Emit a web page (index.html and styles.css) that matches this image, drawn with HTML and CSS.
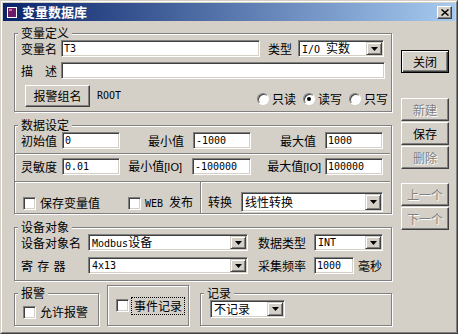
FILE: index.html
```html
<!DOCTYPE html>
<html>
<head>
<meta charset="utf-8">
<link rel="stylesheet" href="styles.css">
</head>
<body>
<div class="win">
 <div class="frame">
  <div class="title">
   <svg class="ticon" width="10" height="11" viewBox="0 0 10 11"><rect x="0.5" y="0.5" width="9" height="10" fill="#6a1a66" stroke="#fff"/><rect x="2" y="2" width="3" height="2" fill="#e07080"/></svg>
   <span class="ttext">变量数据库</span>
   <span class="tclose"><svg width="8" height="7" viewBox="0 0 8 7"><path d="M0.5 0.5 L7.5 6.5 M7.5 0.5 L0.5 6.5" stroke="#000" stroke-width="1.5"/></svg></span>
  </div>
  <div class="main">
   <div class="left">
    <fieldset class="grp g1">
     <legend>变量定义</legend>
     <div class="row ra">
      <span class="lbl w40">变量名</span>
      <span class="edit mono w199">T3</span>
      <span class="lbl ml8">类型</span>
      <span class="combo ml6 w86"><span class="val"><span class="mono">I/O </span>实数</span><span class="drop"><svg width="7" height="4" viewBox="0 0 7 4"><polygon points="0,0 7,0 3.5,4" fill="#000"/></svg></span></span>
     </div>
     <div class="row rb">
      <span class="lbl w40">描　述</span>
      <span class="edit mono w324"></span>
     </div>
     <div class="row rc">
      <span class="btn bgrp">报警组名</span>
      <span class="mono root">ROOT</span>
      <span class="radios">
       <span class="ropt"><span class="radio"></span>只读</span>
       <span class="ropt"><span class="radio on"></span>读写</span>
       <span class="ropt"><span class="radio"></span>只写</span>
      </span>
     </div>
    </fieldset>

    <fieldset class="grp g2">
     <legend>数据设定</legend>
     <div class="sec s1">
      <span class="lbl w41">初始值</span>
      <span class="edit mono w58">0</span>
      <span class="lbl rl w73">最小值</span>
      <span class="edit mono w58">-1000</span>
      <span class="lbl rl w74">最大值</span>
      <span class="edit mono w58">1000</span>
     </div>
     <div class="sec s2">
      <span class="lbl w41">灵敏度</span>
      <span class="edit mono w58">0.01</span>
      <span class="lbl rl w72 pr10">最小值<span class="lat">[IO]</span></span>
      <span class="edit mono w59">-100000</span>
      <span class="lbl rl w74 pr4">最大值<span class="lat">[IO]</span></span>
      <span class="edit mono w58">100000</span>
     </div>
     <div class="sec s3">
      <div class="s3l">
       <span class="chk"></span><span class="ctext">保存变量值</span>
       <span class="chk ml28"></span><span class="ctext"><span class="mono">WEB </span>发布</span>
      </div>
      <div class="s3r">
       <span class="lbl">转换</span>
       <span class="combo ml9 w142 h20"><span class="val">线性转换</span><span class="drop"><svg width="7" height="4" viewBox="0 0 7 4"><polygon points="0,0 7,0 3.5,4" fill="#000"/></svg></span></span>
      </div>
     </div>
    </fieldset>

    <fieldset class="grp g3">
     <legend>设备对象</legend>
     <div class="row r1">
      <span class="lbl w67">设备对象名</span>
      <span class="combo w160"><span class="val"><span class="mono">Modbus</span>设备</span><span class="drop"><svg width="7" height="4" viewBox="0 0 7 4"><polygon points="0,0 7,0 3.5,4" fill="#000"/></svg></span></span>
      <span class="lbl ml10 w48">数据类型</span>
      <span class="combo ml8 w69"><span class="val mono">INT</span><span class="drop"><svg width="7" height="4" viewBox="0 0 7 4"><polygon points="0,0 7,0 3.5,4" fill="#000"/></svg></span></span>
     </div>
     <div class="row r2">
      <span class="lbl w67 spaced">寄 存 器</span>
      <span class="combo w160"><span class="val mono">4x13</span><span class="drop"><svg width="7" height="4" viewBox="0 0 7 4"><polygon points="0,0 7,0 3.5,4" fill="#000"/></svg></span></span>
      <span class="lbl ml10 w48">采集频率</span>
      <span class="edit mono ml8 w40">1000</span>
      <span class="lbl ml4">毫秒</span>
     </div>
    </fieldset>

    <div class="bottom">
     <fieldset class="grp g4">
      <legend>报警</legend>
      <div class="brow"><span class="chk"></span><span class="ctext">允许报警</span></div>
     </fieldset>
     <div class="box">
      <span class="chk"></span><span class="focus">事件记录</span>
     </div>
     <fieldset class="grp g5">
      <legend>记录</legend>
      <div class="brow"><span class="combo w75 h18"><span class="val">不记录</span><span class="drop"><svg width="7" height="4" viewBox="0 0 7 4"><polygon points="0,0 7,0 3.5,4" fill="#000"/></svg></span></span></div>
     </fieldset>
    </div>
   </div>

   <div class="right">
    <span class="btn bdef">关闭</span>
    <span class="btn dis b-new">新建</span>
    <span class="btn b-next">保存</span>
    <span class="btn dis b-next">删除</span>
    <span class="btn dis b-prev">上一个</span>
    <span class="btn dis b-next">下一个</span>
   </div>
  </div>
 </div>
</div>
</body>
</html>
```

FILE: styles.css
```css
* { box-sizing: border-box; }
html, body { margin: 0; padding: 0; }
body {
  width: 458px; height: 334px; overflow: hidden;
  background: #d4d0c8;
  font-family: "Noto Sans CJK SC", "Noto Sans", sans-serif;
  font-size: 12px; line-height: 14px; color: #000;
}
.win {
  width: 458px; height: 334px;
  border: 1px solid; border-color: #d4d0c8 #404040 #404040 #d4d0c8;
  background: #d4d0c8;
}
.frame {
  height: 100%;
  border: 1px solid; border-color: #fff #808080 #808080 #fff;
  padding: 1px;
}
.title {
  height: 18px; display: flex; align-items: center;
  background: linear-gradient(to right, #0a246a, #a6caf0);
}
.ticon { margin-left: 4px; flex: none; }
.ttext { margin-left: 5px; color: #fff; font-weight: bold; font-size: 13px; line-height: 16px; }
.tclose {
  margin-left: auto; margin-right: 3px;
  width: 15px; height: 13px;
  display: flex; align-items: center; justify-content: center;
  background: #d4d0c8;
  border: 1px solid; border-color: #fff #404040 #404040 #fff;
  box-shadow: inset -1px -1px 0 #808080;
}
.main { display: flex; padding: 5px 0 0 11px; }
.left { width: 378px; flex: none; }
.right { width: 48px; margin-left: 9px; display: flex; flex-direction: column; padding-top: 24px; }

.mono { font-family: "DejaVu Sans Mono", monospace; font-size: 10px; }
.lat { font-family: "Liberation Sans", sans-serif; font-size: 11px; }

.grp {
  margin: 0; padding: 0; min-width: 0;
  border: 1px solid #808080;
  box-shadow: inset 1px 1px 0 #fff, 1px 1px 0 #fff;
}
.grp legend {
  padding: 0 3px; margin-left: 3px;
  line-height: 14px; background: #d4d0c8;
}

.row { display: flex; align-items: center; padding-left: 6px; }
.lbl { flex: none; white-space: nowrap; }
.rl { text-align: right; padding-right: 9px; }
.pr10 { padding-right: 10px; }
.pr4 { padding-right: 4px; }
.w40 { width: 40px; } .w41 { width: 41px; } .w48 { width: 48px; } .w58 { width: 58px; } .w59 { width: 59px; }
.w67 { width: 67px; } .w69 { width: 69px; } .w72 { width: 72px; } .w73 { width: 73px; } .w74 { width: 74px; }
.w75 { width: 75px; } .w86 { width: 86px; } .w142 { width: 142px; } .w160 { width: 160px; }
.w199 { width: 199px; } .w324 { width: 324px; }
.ml4 { margin-left: 4px; } .ml6 { margin-left: 6px; } .ml8 { margin-left: 8px; } .ml9 { margin-left: 9px; } .ml10 { margin-left: 10px; } .ml28 { margin-left: 28px; }
.spaced { word-spacing: 1.5px; }

.edit, .combo {
  flex: none; height: 17px; background: #fff;
  border: 1px solid; border-color: #808080 #fff #fff #808080;
  box-shadow: inset 1px 1px 0 #404040, inset -1px -1px 0 #d4d0c8;
  display: flex; align-items: center; padding-left: 2px;
  white-space: nowrap; overflow: hidden;
}
.combo { padding: 1px 1px 1px 2px; }
.combo .val { flex: 1; padding-left: 1px; }
.combo .drop {
  flex: none; width: 16px; height: 100%;
  background: #d4d0c8;
  border: 1px solid; border-color: #d4d0c8 #404040 #404040 #d4d0c8;
  box-shadow: inset 1px 1px 0 #fff, inset -1px -1px 0 #808080;
  display: flex; align-items: center; justify-content: center;
}
.combo .drop svg { display: block; }
.h20 { height: 20px; }
.h18 { height: 18px; }

.g1 .ra { height: 17px; }
.g1 .rb { margin-top: 5px; height: 17px; }
.g1 .rc { margin-top: 6px; height: 22px; padding-right: 3px; margin-bottom: 4px; }

.btn {
  flex: none; background: #d4d0c8;
  border: 1px solid; border-color: #fff #404040 #404040 #fff;
  box-shadow: inset -1px -1px 0 #808080;
  display: flex; align-items: center; justify-content: center;
  white-space: nowrap;
}
.bgrp { margin-left: 4px; width: 65px; height: 22px; }
.root { margin-left: 7px; }
.radios { margin-left: auto; display: flex; align-self: flex-end; margin-bottom: 1px; }
.ropt { display: flex; align-items: center; margin-left: 7px; }
.radio {
  width: 12px; height: 12px; border-radius: 50%; margin-right: 3px;
  background: #fff; border: 1px solid; border-color: #808080 #fff #fff #808080;
  box-shadow: inset 1px 1px 0 #404040;
  display: flex; align-items: center; justify-content: center;
}
.radio.on::after { content: ""; width: 4px; height: 4px; border-radius: 50%; background: #000; }

.g2 { margin-top: 6px; }
.sec { display: flex; align-items: center; padding-left: 6px; }
.s1 { height: 21px; padding-bottom: 4px; }
.s2 { height: 28px; border-top: 1px solid #808080; box-shadow: inset 0 1px 0 #fff; padding-top: 4px; padding-bottom: 6px; margin-right: 1px; }
.s3 { height: 32px; border-top: 1px solid #808080; box-shadow: inset 0 1px 0 #fff; padding-left: 0; align-items: stretch; margin-right: 1px; }
.s3l { width: 186px; border-right: 1px solid #808080; display: flex; align-items: center; padding: 11px 0 0 8px; }
.s3r { flex: 1; border-left: 1px solid #fff; display: flex; align-items: center; padding: 10px 0 1px 6px; }

.chk {
  flex: none; width: 13px; height: 13px; background: #fff;
  border: 1px solid; border-color: #808080 #fff #fff #808080;
  box-shadow: inset 1px 1px 0 #404040, inset -1px -1px 0 #d4d0c8;
}
.ctext { margin-left: 4px; white-space: nowrap; }

.g3 { margin-top: 6px; }
.g3 .r1 { height: 17px; }
.g3 .r2 { height: 17px; margin-top: 6px; margin-bottom: 6px; }

.bottom { display: flex; align-items: flex-start; margin-top: 4px; }
.g4 { width: 85px; height: 40px; margin-top: 1px; flex: none; }
.g5 { width: 192px; height: 40px; margin-top: 1px; margin-left: 11px; flex: none; }
.brow { display: flex; align-items: center; padding-left: 8px; }
.g4 .brow { padding-top: 5px; }
.g5 .brow { padding-left: 9px; }
.box {
  flex: none; width: 82px; height: 41px; margin-left: 8px;
  border: 1px solid #808080;
  box-shadow: inset 1px 1px 0 #fff, 1px 1px 0 #fff;
  display: flex; align-items: center; padding: 0 0 0 8px;
}
.focus { margin-left: 2px; padding: 1px 2px; border: 1px dotted #000; white-space: nowrap; }

.bdef { border-color: #000; box-shadow: inset 1px 1px 0 #fff, inset -1px -1px 0 #404040, inset -2px -2px 0 #808080; }
.btn.dis { color: #808080; text-shadow: 1px 1px 0 #fff; }
.right .btn { width: 48px; height: 23px; }
.b-new { margin-top: 25px; }
.b-next { margin-top: 1px; }
.b-prev { margin-top: 14px; }
```
